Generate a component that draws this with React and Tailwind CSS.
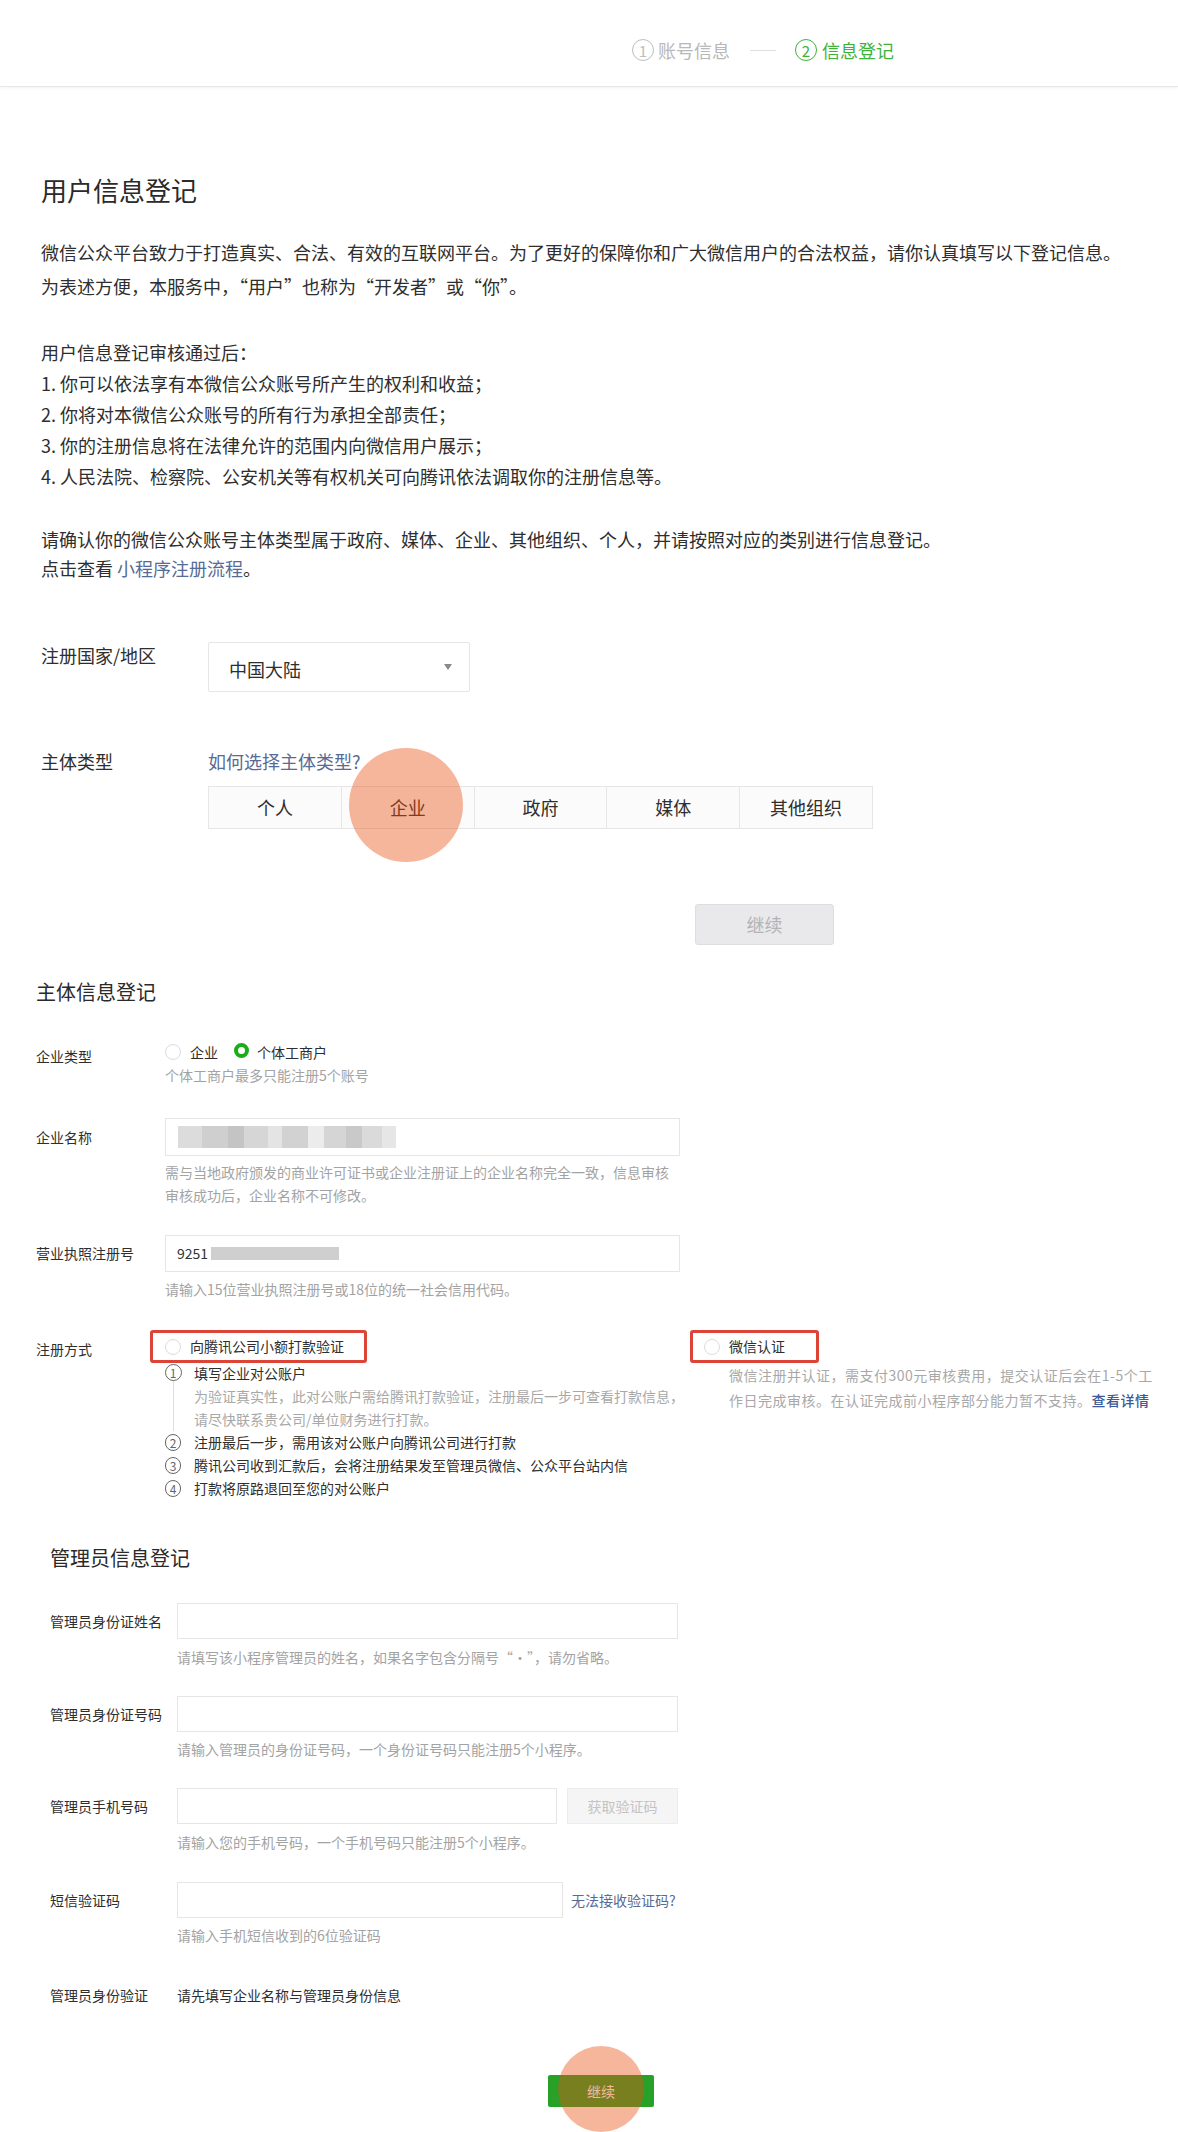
import React from 'react';

const Circled = ({ n, className = '' }) => (
  <span className={`inline-flex items-center justify-center rounded-full border-[1.5px] border-current leading-none ${className}`}>
    {n}
  </span>
);

const Radio = ({ checked }) =>
  checked ? (
    <span className="inline-block w-[15px] h-[15px] rounded-full border-[4px] border-[#1aad19] bg-white shrink-0" />
  ) : (
    <span className="inline-block w-[16px] h-[16px] rounded-full border border-[#dcdcdc] bg-white shrink-0" />
  );

const Hint = ({ children, className = '' }) => (
  <div className={`text-[14px] leading-[23px] text-[#a3a3a3] ${className}`}>{children}</div>
);

const Blur = ({ blocks }) => (
  <div className="flex items-center">
    {blocks.map(([w, c], i) => (
      <span key={i} className="inline-block h-[22px]" style={{ width: w, background: c }} />
    ))}
  </div>
);

const App = () => {
  return (
    <div className="relative w-[1178px] h-[2132px] overflow-hidden bg-white text-[#2e2e2e] font-['Noto_Sans_CJK_SC','Liberation_Sans',sans-serif]">
      {/* top bar */}
      <header className="h-[87px] border-b border-[#e8e8e8] shadow-[0_1px_3px_rgba(0,0,0,0.05)] flex items-center">
        <div className="ml-[632px] mt-[14px] flex items-center text-[18px] leading-[24px]">
          <Circled n="1" className="w-[22px] h-[22px] text-[15px] text-[#bdbdbd]" />
          <span className="ml-[4px] text-[#b8b8b8]">账号信息</span>
          <span className="ml-[20px] w-[26px] h-px bg-[#dedede]" />
          <Circled n="2" className="ml-[19px] w-[22px] h-[22px] text-[15px] text-[#3fb23a]" />
          <span className="ml-[5px] text-[#3fb23a]">信息登记</span>
        </div>
      </header>

      {/* 用户信息登记 */}
      <section className="pl-[41px]">
        <h1 className="mt-[85px] text-[26px] leading-[36px] font-normal text-[#2a2a2a]">用户信息登记</h1>
        <p className="mt-[27px] text-[18px] leading-[34px]">
          微信公众平台致力于打造真实、合法、有效的互联网平台。为了更好的保障你和广大微信用户的合法权益，请你认真填写以下登记信息。
          <br />
          为表述方便，本服务中，“用户”也称为“开发者”或“你”。
        </p>
        <div className="mt-[34px] text-[18px] leading-[31px]">
          <div>用户信息登记审核通过后：</div>
          <div>1. 你可以依法享有本微信公众账号所产生的权利和收益；</div>
          <div>2. 你将对本微信公众账号的所有行为承担全部责任；</div>
          <div>3. 你的注册信息将在法律允许的范围内向微信用户展示；</div>
          <div>4. 人民法院、检察院、公安机关等有权机关可向腾讯依法调取你的注册信息等。</div>
        </div>
        <div className="mt-[33px] text-[18px] leading-[29px]">
          <div>请确认你的微信公众账号主体类型属于政府、媒体、企业、其他组织、个人，并请按照对应的类别进行信息登记。</div>
          <div>
            点击查看 <span className="text-[#576b95]">小程序注册流程</span>。
          </div>
        </div>

        <div className="mt-[59px] flex items-start">
          <div className="w-[167px] text-[18px] leading-[28px] -mt-[1px]">注册国家/地区</div>
          <div className="w-[262px] h-[50px] border border-[#e6e6e6] rounded-[2px] flex items-center justify-between pl-[20px] pr-[17px] text-[18px]">
            <span className="mt-[5px]">中国大陆</span>
            <span className="w-0 h-0 border-l-[4px] border-r-[4px] border-t-[6px] border-l-transparent border-r-transparent border-t-[#8a8a8a]" />
          </div>
        </div>

        <div className="mt-[55px] flex items-start">
          <div className="w-[167px] text-[18px] leading-[28px]">主体类型</div>
          <div>
            <div className="text-[18px] leading-[28px] text-[#576b95]">如何选择主体类型?</div>
            <div className="mt-[11px] flex w-[665px] h-[43px] border border-[#e6e6e6] bg-[#fbfbfb]">
              {['个人', '企业', '政府', '媒体', '其他组织'].map((t, i) => (
                <div
                  key={t}
                  className={`flex-1 flex items-center justify-center text-[18px] ${i > 0 ? 'border-l border-[#e6e6e6]' : ''}`}
                >
                  {t}
                </div>
              ))}
            </div>
          </div>
        </div>

        <div className="mt-[75px] ml-[654px] w-[139px] h-[41px] flex items-center justify-center bg-[#e9e9ec] border border-[#dedede] rounded-[3px] text-[18px] text-[#b3b3b3]">
          继续
        </div>
      </section>

      {/* 主体信息登记 */}
      <section className="pl-[36px]">
        <h2 className="mt-[32px] text-[20px] leading-[30px] font-normal text-[#2a2a2a]">主体信息登记</h2>

        <div className="mt-[34px] flex items-start text-[14px]">
          <div className="w-[129px] leading-[22px] pt-[4px]">企业类型</div>
          <div>
            <div className="flex items-center h-[22px]">
              <Radio />
              <span className="ml-[9px]">企业</span>
              <span className="ml-[16px]"><Radio checked /></span>
              <span className="ml-[8px]">个体工商户</span>
            </div>
            <Hint className="mt-[1px]">个体工商户最多只能注册5个账号</Hint>
          </div>
        </div>

        <div className="mt-[31px] flex items-start text-[14px]">
          <div className="w-[129px] h-[38px] flex items-center">企业名称</div>
          <div>
            <div className="w-[515px] h-[38px] border border-[#e6e6e6] flex items-center pl-[12px]">
              <Blur
                blocks={[
                  ['24px', '#dcdcdc'],
                  ['26px', '#cfcfcf'],
                  ['16px', '#c4c4c4'],
                  ['24px', '#d6d6d6'],
                  ['14px', '#e4e4e4'],
                  ['26px', '#d2d2d2'],
                  ['16px', '#ececec'],
                  ['22px', '#d5d5d5'],
                  ['16px', '#c9c9c9'],
                  ['20px', '#dadada'],
                  ['14px', '#e6e6e6'],
                ]}
              />
            </div>
            <Hint className="mt-[5px]">
              需与当地政府颁发的商业许可证书或企业注册证上的企业名称完全一致，信息审核
              <br />
              审核成功后，企业名称不可修改。
            </Hint>
          </div>
        </div>

        <div className="mt-[28px] flex items-start text-[14px]">
          <div className="w-[129px] h-[37px] flex items-center">营业执照注册号</div>
          <div>
            <div className="w-[515px] h-[37px] border border-[#e6e6e6] flex items-center pl-[11px]">
              <span className="text-[#333]">9251</span>
              <span className="ml-[3px] w-[128px] h-[13px] bg-[#cfcfcf]" />
            </div>
            <Hint className="mt-[6px]">请输入15位营业执照注册号或18位的统一社会信用代码。</Hint>
          </div>
        </div>

        <div className="mt-[29px] flex items-start text-[14px]">
          <div className="w-[129px] pt-[8px] leading-[22px]">注册方式</div>
          <div className="w-[525px]">
            <div className="-ml-[15px] inline-flex items-center h-[33px] pl-[12px] pr-[20px] border-[3px] border-[#dc4437] rounded-[3px]">
              <Radio />
              <span className="ml-[9px]">向腾讯公司小额打款验证</span>
            </div>
            <div className="-mt-[1px] leading-[23px]">
              <div className="flex">
                <div className="w-[16px] flex flex-col items-center">
                  <Circled n="1" className="mt-[2px] w-[17px] h-[17px] text-[12px] text-[#666]" />
                  <span className="flex-1 w-px bg-[#dedede]" />
                </div>
                <div className="ml-[13px]">
                  <div>填写企业对公账户</div>
                  <div className="text-[#a8a8a8]">
                    为验证真实性，此对公账户需给腾讯打款验证，注册最后一步可查看打款信息，
                    <br />
                    请尽快联系贵公司/单位财务进行打款。
                  </div>
                </div>
              </div>
              {[
                ['2', '注册最后一步，需用该对公账户向腾讯公司进行打款'],
                ['3', '腾讯公司收到汇款后，会将注册结果发至管理员微信、公众平台站内信'],
                ['4', '打款将原路退回至您的对公账户'],
              ].map(([n, t]) => (
                <div key={n} className="flex items-center">
                  <div className="w-[16px] flex justify-center">
                    <Circled n={n} className="w-[17px] h-[17px] text-[12px] text-[#666]" />
                  </div>
                  <div className="ml-[13px]">{t}</div>
                </div>
              ))}
            </div>
          </div>
          <div>
            <div className="inline-flex items-center h-[33px] pl-[11px] pr-[31px] border-[3px] border-[#dc4437] rounded-[3px]">
              <Radio />
              <span className="ml-[9px]">微信认证</span>
            </div>
            <div className="ml-[39px] leading-[25px] tracking-[0.5px] text-[#a8a8a8]">
              微信注册并认证，需支付300元审核费用，提交认证后会在1-5个工
              <br />
              作日完成审核。在认证完成前小程序部分能力暂不支持。
              <span className="text-[#3d5a98] font-medium">查看详情</span>
            </div>
          </div>
        </div>
      </section>

      {/* 管理员信息登记 */}
      <section className="pl-[50px] text-[14px]">
        <h2 className="mt-[43px] text-[20px] leading-[30px] font-normal text-[#2a2a2a]">管理员信息登记</h2>

        <div className="mt-[30px] flex items-start">
          <div className="w-[127px] h-[36px] flex items-center">管理员身份证姓名</div>
          <div>
            <div className="w-[501px] h-[36px] border border-[#e6e6e6]" />
            <Hint className="mt-[7px]">请填写该小程序管理员的姓名，如果名字包含分隔号“·”，请勿省略。</Hint>
          </div>
        </div>

        <div className="mt-[27px] flex items-start">
          <div className="w-[127px] h-[36px] flex items-center">管理员身份证号码</div>
          <div>
            <div className="w-[501px] h-[36px] border border-[#e6e6e6]" />
            <Hint className="mt-[6px]">请输入管理员的身份证号码，一个身份证号码只能注册5个小程序。</Hint>
          </div>
        </div>

        <div className="mt-[27px] flex items-start">
          <div className="w-[127px] h-[36px] flex items-center">管理员手机号码</div>
          <div>
            <div className="flex gap-[10px]">
              <div className="w-[380px] h-[36px] border border-[#e6e6e6]" />
              <div className="w-[111px] h-[36px] border border-[#ececec] bg-[#f5f5f5] flex items-center justify-center text-[#c4c4c4]">
                获取验证码
              </div>
            </div>
            <Hint className="mt-[7px]">请输入您的手机号码，一个手机号码只能注册5个小程序。</Hint>
          </div>
        </div>

        <div className="mt-[28px] flex items-start">
          <div className="w-[127px] h-[36px] flex items-center">短信验证码</div>
          <div>
            <div className="flex items-center gap-[8px]">
              <div className="w-[386px] h-[36px] border border-[#e6e6e6]" />
              <span className="text-[#576b95]">无法接收验证码?</span>
            </div>
            <Hint className="mt-[6px]">请输入手机短信收到的6位验证码</Hint>
          </div>
        </div>

        <div className="mt-[37px] flex items-start leading-[22px]">
          <div className="w-[127px]">管理员身份验证</div>
          <div>请先填写企业名称与管理员身份信息</div>
        </div>

        <div className="mt-[69px] ml-[498px] w-[106px] h-[32px] rounded-[2px] bg-[#27a127] flex items-center justify-center text-white">
          继续
        </div>
      </section>

      {/* tap indicators */}
      <span className="absolute left-[349px] top-[748px] w-[114px] h-[114px] rounded-full bg-[rgba(233,80,20,0.42)]" />
      <span className="absolute left-[558px] top-[2046px] w-[86px] h-[86px] rounded-full bg-[rgba(233,80,20,0.42)]" />
    </div>
  );
};

export default App;
